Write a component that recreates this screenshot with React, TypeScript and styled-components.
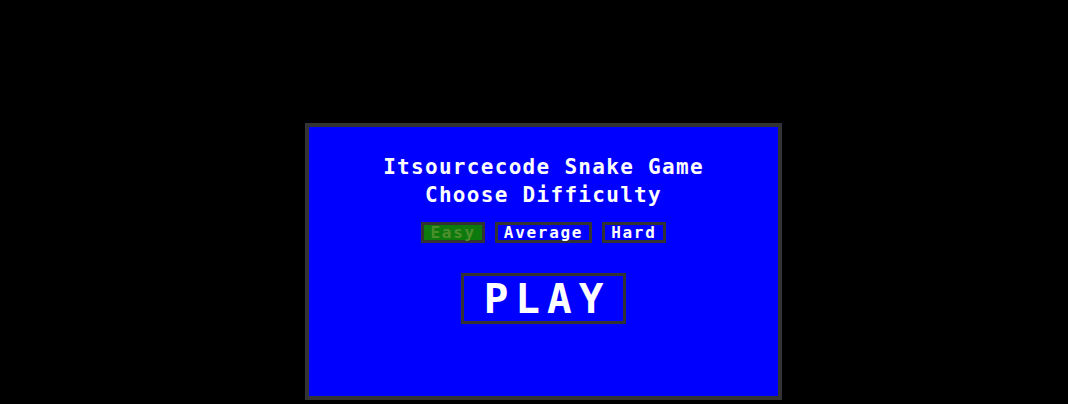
import React from 'react';
import styled, { createGlobalStyle } from 'styled-components';

const GlobalStyle = createGlobalStyle`
  html, body {
    margin: 0;
    padding: 0;
    background: #000;
  }
`;

const Page = styled.div`
  width: 1068px;
  height: 404px;
  overflow: hidden;
  padding: 123px 0 0 305px;
  box-sizing: border-box;
  font-family: "DejaVu Sans Mono", "Liberation Mono", monospace;
  font-weight: bold;
  color: #fff;
`;

const Board = styled.div`
  width: 477px;
  height: 277px;
  box-sizing: border-box;
  border: 4px solid #333;
  background: #0000ff;
  display: flex;
  flex-direction: column;
  align-items: center;
  padding-top: 26px;
`;

const Title = styled.div`
  font-size: 21px;
  line-height: 28px;
  letter-spacing: 1.3px;
  text-align: center;
`;

const Levels = styled.div`
  display: flex;
  gap: 10px;
  margin-top: 13px;
`;

const Level = styled.button<{ $active?: boolean }>`
  height: 21px;
  box-sizing: border-box;
  padding: 0 6px;
  border: 3px solid #333;
  background: ${(p) => (p.$active ? '#0d7a0d' : '#0000ff')};
  color: ${(p) => (p.$active ? '#4d8f2d' : '#fff')};
  font-family: inherit;
  font-weight: bold;
  font-size: 16px;
  line-height: 15px;
  letter-spacing: 1.7px;
  cursor: pointer;
`;

const Play = styled.button`
  margin-top: 30px;
  width: 165px;
  height: 51px;
  box-sizing: border-box;
  border: 3px solid #333;
  background: #0000ff;
  color: #fff;
  font-family: inherit;
  font-weight: bold;
  font-size: 41px;
  line-height: 40px;
  letter-spacing: 7px;
  padding: 0 0 0 7px;
  cursor: pointer;
`;

const levels = ['Easy', 'Average', 'Hard'];

const App: React.FC = () => (
  <>
    <GlobalStyle />
    <Page>
      <Board>
        <Title>Itsourcecode Snake Game</Title>
        <Title>Choose Difficulty</Title>
        <Levels>
          {levels.map((l) => (
            <Level key={l} $active={l === 'Easy'}>{l}</Level>
          ))}
        </Levels>
        <Play>PLAY</Play>
      </Board>
    </Page>
  </>
);

export default App;
